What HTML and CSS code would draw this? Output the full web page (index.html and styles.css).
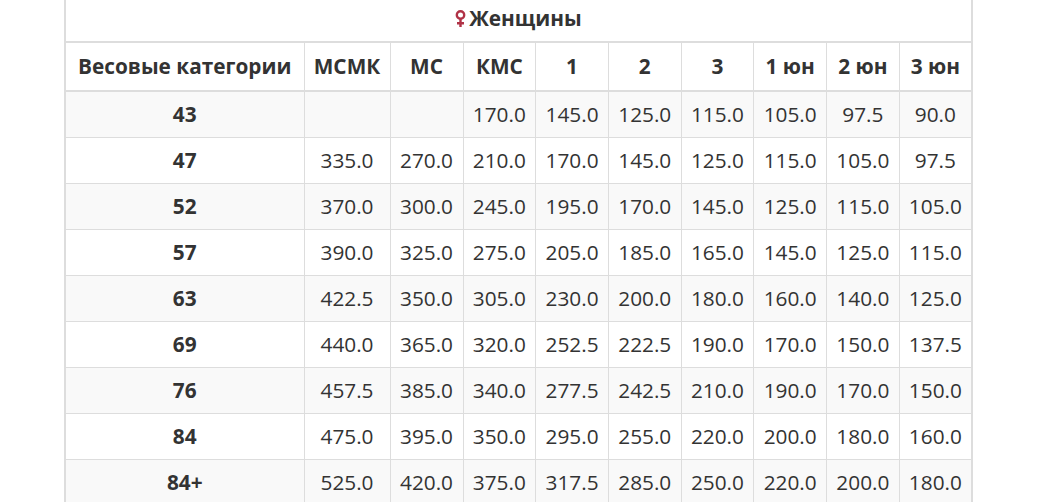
FILE: index.html
```html
<!DOCTYPE html>
<html lang="ru">
<head>
<meta charset="utf-8">
<title>Женщины</title>
<link rel="stylesheet" href="styles.css">
</head>
<body>
<div class="wrap">
<table class="norms">
<colgroup>
<col class="c-cat"><col class="c-mcmk"><col class="c-mc"><col class="c-n"><col class="c-n"><col class="c-n"><col class="c-n"><col class="c-n"><col class="c-n"><col class="c-n">
</colgroup>
<thead>
<tr class="title-row">
<th colspan="10"><svg class="venus" viewBox="0 0 11 17" width="11" height="17" aria-hidden="true"><circle cx="5.5" cy="5" r="3.7" fill="none" stroke="currentColor" stroke-width="2.4"/><path d="M5.5 8.6V17M2 13.3H9" stroke="currentColor" stroke-width="2.4" fill="none"/></svg>Женщины</th>
</tr>
<tr class="head-row">
<th>Весовые категории</th><th>МСМК</th><th>МС</th><th>КМС</th><th>1</th><th>2</th><th>3</th><th>1 юн</th><th>2 юн</th><th>3 юн</th>
</tr>
</thead>
<tbody>
<tr><th>43</th><td></td><td></td><td>170.0</td><td>145.0</td><td>125.0</td><td>115.0</td><td>105.0</td><td>97.5</td><td>90.0</td></tr>
<tr><th>47</th><td>335.0</td><td>270.0</td><td>210.0</td><td>170.0</td><td>145.0</td><td>125.0</td><td>115.0</td><td>105.0</td><td>97.5</td></tr>
<tr><th>52</th><td>370.0</td><td>300.0</td><td>245.0</td><td>195.0</td><td>170.0</td><td>145.0</td><td>125.0</td><td>115.0</td><td>105.0</td></tr>
<tr><th>57</th><td>390.0</td><td>325.0</td><td>275.0</td><td>205.0</td><td>185.0</td><td>165.0</td><td>145.0</td><td>125.0</td><td>115.0</td></tr>
<tr><th>63</th><td>422.5</td><td>350.0</td><td>305.0</td><td>230.0</td><td>200.0</td><td>180.0</td><td>160.0</td><td>140.0</td><td>125.0</td></tr>
<tr><th>69</th><td>440.0</td><td>365.0</td><td>320.0</td><td>252.5</td><td>222.5</td><td>190.0</td><td>170.0</td><td>150.0</td><td>137.5</td></tr>
<tr><th>76</th><td>457.5</td><td>385.0</td><td>340.0</td><td>277.5</td><td>242.5</td><td>210.0</td><td>190.0</td><td>170.0</td><td>150.0</td></tr>
<tr><th>84</th><td>475.0</td><td>395.0</td><td>350.0</td><td>295.0</td><td>255.0</td><td>220.0</td><td>200.0</td><td>180.0</td><td>160.0</td></tr>
<tr><th>84+</th><td>525.0</td><td>420.0</td><td>375.0</td><td>317.5</td><td>285.0</td><td>250.0</td><td>220.0</td><td>200.0</td><td>180.0</td></tr>
</tbody>
</table>
</div>
</body>
</html>
```
FILE: styles.css
```css
html, body {
  margin: 0;
  padding: 0;
  background: #fff;
}
body {
  font-family: "Open Sans", "Liberation Sans", sans-serif;
  font-size: 20.8px;
  color: #333;
  overflow: hidden;
}
.wrap {
  padding-left: 64px;
  margin-top: -4px;
}
.norms {
  width: 909px;
  table-layout: fixed;
  border-collapse: collapse;
  border: 2px solid #ddd;
  border-top: 0;
}
.c-cat { width: 239px; }
.c-mcmk { width: 86px; }
.c-mc { width: 73px; }
.norms th, .norms td {
  border: 1px solid #ddd;
  padding: 10px 0;
  line-height: 25px;
  height: 25px;
  text-align: center;
  vertical-align: middle;
  white-space: nowrap;
}
.norms th { font-weight: 700; }
.norms td { font-weight: 400; }
.norms thead th { border-bottom-width: 2px; }
.title-row th { border-top: 0; }
.head-row th { padding-top: 11px; padding-bottom: 11px; }
.norms tbody tr:nth-child(odd) { background: #f9f9f9; }
.venus {
  color: #b03246;
  vertical-align: -1px;
  margin-right: 3px;
}
```
